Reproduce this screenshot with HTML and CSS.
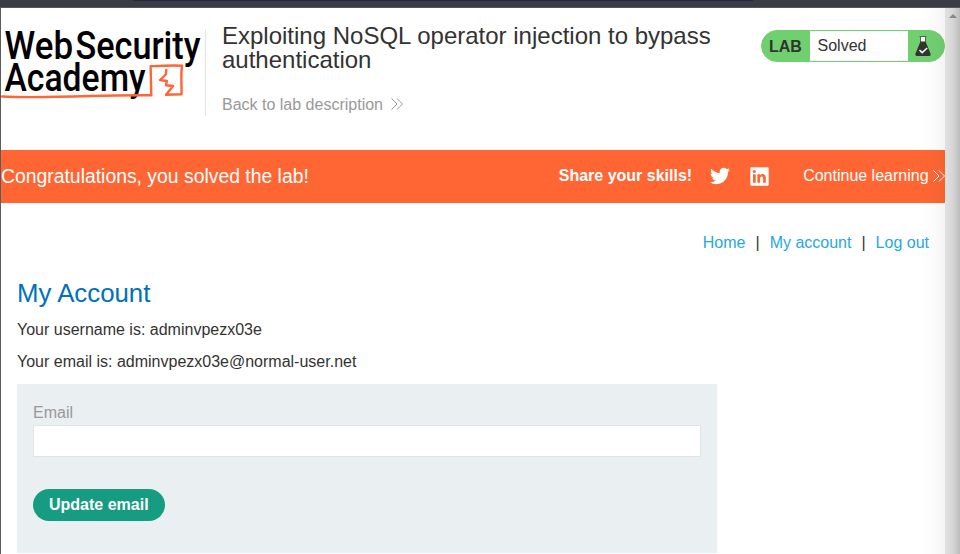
FILE: index.html
```html
<!DOCTYPE html>
<html lang="en">
<head>
<meta charset="utf-8">
<title>My Account</title>
<link rel="stylesheet" href="styles.css">
</head>
<body>
<div class="chrome"><div class="chrome-line"></div></div>
<div class="viewport">
  <div class="page">
    <header class="lab-header">
      <div class="logo">
        <svg width="204" height="86" viewBox="1 30 204 86" role="img" aria-label="Web Security Academy">
          <g class="logo-text">
            <text x="4.500" y="59" textLength="68.500" lengthAdjust="spacingAndGlyphs">Web</text>
            <text x="75.500" y="59" textLength="125" lengthAdjust="spacingAndGlyphs">Security</text>
            <text x="4.500" y="91" textLength="141" lengthAdjust="spacingAndGlyphs">Academy</text>
          </g>
          <g class="logo-mark">
            <path d="M2 96.500C30 98 60 97 90 96C115 95.300 135 95.200 151.300 95.300L150.600 66.200C160 65.800 172 65.200 182 65.700C180.600 75 181.800 84 181.500 94.300L166 94.700L173 86L166 85.300L166.800 81L160 80L165.800 74.500L166.300 70"/>
          </g>
        </svg>
      </div>
      <div class="title">
        <h2>Exploiting NoSQL operator injection to bypass authentication</h2>
        <a class="back">Back to lab description <svg width="12" height="12" viewBox="0 0 12 12"><path d="M.5.5 6 6 .5 11.500M6 .5 11.500 6 6 11.500"/></svg></a>
      </div>
      <div class="status">
        <span class="status-tag">LAB</span>
        <span class="status-text">Solved</span>
        <span class="status-icon"><svg width="18" height="20" viewBox="0 0 18 20"><path class="glass" d="M7 1h4v5H7z"/><path class="neck" d="M5.500.5h7M6.500 1v5M11.500 1v5"/><path class="flask" d="M6.500 5.500h5l5 12q.7 2.200-1 2.500h-13q-1.700-.3-1-2.500z"/><path class="check" d="m5.500 14 2.700 2.600 5-4.600"/></svg></span>
      </div>
    </header>
    <section class="banner">
      <h4>Congratulations, you solved the lab!</h4>
      <div class="share">
        <strong>Share your skills!</strong>
        <svg class="twitter" width="20" height="18" viewBox="0 2 24 20"><path d="M23.950 4.570a10 10 0 0 1-2.820.770 4.960 4.960 0 0 0 2.160-2.720c-.950.550-2 .960-3.130 1.180a4.920 4.920 0 0 0-8.380 4.480C7.690 8.100 4.070 6.130 1.640 3.160a4.820 4.820 0 0 0-.670 2.480c0 1.710.870 3.210 2.190 4.100a4.900 4.900 0 0 1-2.230-.620v.060a4.920 4.920 0 0 0 3.950 4.830 5 5 0 0 1-2.210.080 4.940 4.940 0 0 0 4.600 3.420A9.870 9.870 0 0 1 0 19.540a13.990 13.990 0 0 0 7.550 2.210c9.050 0 14-7.500 14-13.980 0-.210 0-.420-.020-.630a9.940 9.940 0 0 0 2.460-2.550z"/></svg>
        <svg class="linkedin" width="19" height="19" viewBox="0 0 19 19"><path fill-rule="evenodd" d="M1.500.3h16q1.200 0 1.200 1.200v16q0 1.200-1.200 1.200h-16Q.3 18.700.3 17.500v-16Q.3.300 1.500.3zM3 7.300v8.500h2.700V7.300zM4.350 3a1.550 1.550 0 1 0 0 3.100 1.550 1.550 0 0 0 0-3.100zM7.400 7.300v8.500h2.700v-4.200c0-2.600 3-2.700 3 0v4.200h2.700v-5c0-4.200-4.100-4.600-5.700-2.300V7.300z"/></svg>
        <a class="continue">Continue learning <svg width="12" height="12" viewBox="0 0 12 12"><path d="M.5.500 6 6 .5 11.500M6 .5 11.500 6 6 11.500"/></svg></a>
      </div>
    </section>
    <main>
      <nav><a>Home</a><span>|</span><a>My account</a><span>|</span><a>Log out</a></nav>
      <h1>My Account</h1>
      <p>Your username is: adminvpezx03e</p>
      <p>Your email is: adminvpezx03e@normal-user.net</p>
      <form>
        <label for="email">Email</label>
        <input id="email" type="email">
        <button type="button">Update email</button>
      </form>
    </main>
  </div>
  <div class="scrollbar"><i></i></div>
  <div class="edge-shade"></div>
</div>
</body>
</html>
```
FILE: styles.css
```css
* { box-sizing: border-box; }
body {
  margin: 0;
  height: 554px;
  overflow: hidden;
  display: flex;
  flex-direction: column;
  background: #fff;
  color: #333332;
  font: 16px/20px "Liberation Sans", Arial, sans-serif;
}
h1, h2, h4, p { margin: 0; font-weight: 400; }
.chrome { height: 8px; flex: none; background: #3a3b44; border-bottom: 1px solid #55565b; }
.chrome-line { height: 1px; margin: 0 207px 0 133px; background: #25273a; }
.viewport { flex: 1; display: flex; position: relative; border-left: 1px solid #5c5c5f; }
.page { width: 944px; flex: none; overflow: hidden; }

.lab-header { height: 142px; padding-top: 22px; display: flex; align-items: flex-start; }
.logo { width: 205px; height: 86px; border-right: 1px solid #e2e2e2; flex: none; }
.logo svg { display: block; overflow: visible; }
.logo-text { font: 500 38.500px Roboto, sans-serif; fill: #000; }
.logo-mark path { fill: none; stroke: #ff6633; stroke-width: 2.400; stroke-linejoin: round; stroke-linecap: round; }
.title { width: 555px; flex: none; padding: 0 40px 0 16px; margin-top: -6px; }
.title h2 { font-size: 24px; line-height: 24px; }
.back { display: block; margin-top: 23px; color: #999; }
.back svg, .continue svg { fill: none; stroke: currentColor; stroke-width: 1; }
.back svg { margin-left: 4px; }
.status { width: 184px; height: 32px; display: flex; border: 1px solid #70d070; border-radius: 16px; background: #70d070; overflow: hidden; }
.status-tag { width: 48px; padding-left: 7px; line-height: 31px; font-weight: 700; }
.status-text { width: 98px; padding-left: 7.500px; line-height: 29px; background: #fff; }
.status-icon { padding: 5px 0 0 6px; }
.status-icon svg { display: block; }
.neck { fill: none; stroke: #4a6a48; stroke-width: 1; }
.glass { fill: #fff; }
.flask { fill: #333332; }
.check { fill: none; stroke: #fff; stroke-width: 1.500; }

.banner { height: 53px; padding-bottom: 2px; background: #ff6633; color: #fff; display: flex; justify-content: space-between; align-items: center; }
.banner h4 { font-size: 19.360px; line-height: 20px; margin-top: 1px; }
.share { display: flex; align-items: center; white-space: nowrap; }
.share > svg { fill: #fff; }
.twitter { margin-left: 18px; }
.linkedin { margin: 2px 0 0 20px; }
.continue { margin-left: 34px; }
.continue svg { vertical-align: -1px; margin-right: 0; }

main { padding: 30px 16px 0; }
nav { display: flex; justify-content: flex-end; gap: 10px; }
nav a { color: #29a7de; }
h1 { margin-top: 25px; font-size: 25.800px; line-height: 30px; color: #0071bc; }
p { margin-top: 12px; }
h1 + p { margin-top: 12px; }
form { width: 700px; height: 169px; margin-top: 12px; padding: 19px 16px; background: #eaeff2; display: flex; flex-direction: column; align-items: flex-start; }
label { color: #999; }
input { width: 668px; height: 32px; margin-top: 2px; border: 1px solid #e2e4e4; background: #fff; }
button { height: 32px; margin-top: 32px; padding: 0 16px; border: 0; border-radius: 16px; background: #169c80; color: #fff; font: 700 16px "Liberation Sans", Arial, sans-serif; }

.scrollbar { width: 15px; background: #ebebeb; display: flex; justify-content: center; padding-top: 6px; }
.scrollbar i { width: 0; height: 4px; border: 4px solid transparent; border-top: 0; border-bottom-color: #969696; }
.edge-shade { position: absolute; top: 0; right: 0; bottom: 0; width: 40px; background: linear-gradient(to right, rgba(0,0,0,0), rgba(0,0,0,.015) 35%, rgba(0,0,0,.045) 62%, rgba(0,0,0,.09) 82%, rgba(0,0,0,.2)); }
```
